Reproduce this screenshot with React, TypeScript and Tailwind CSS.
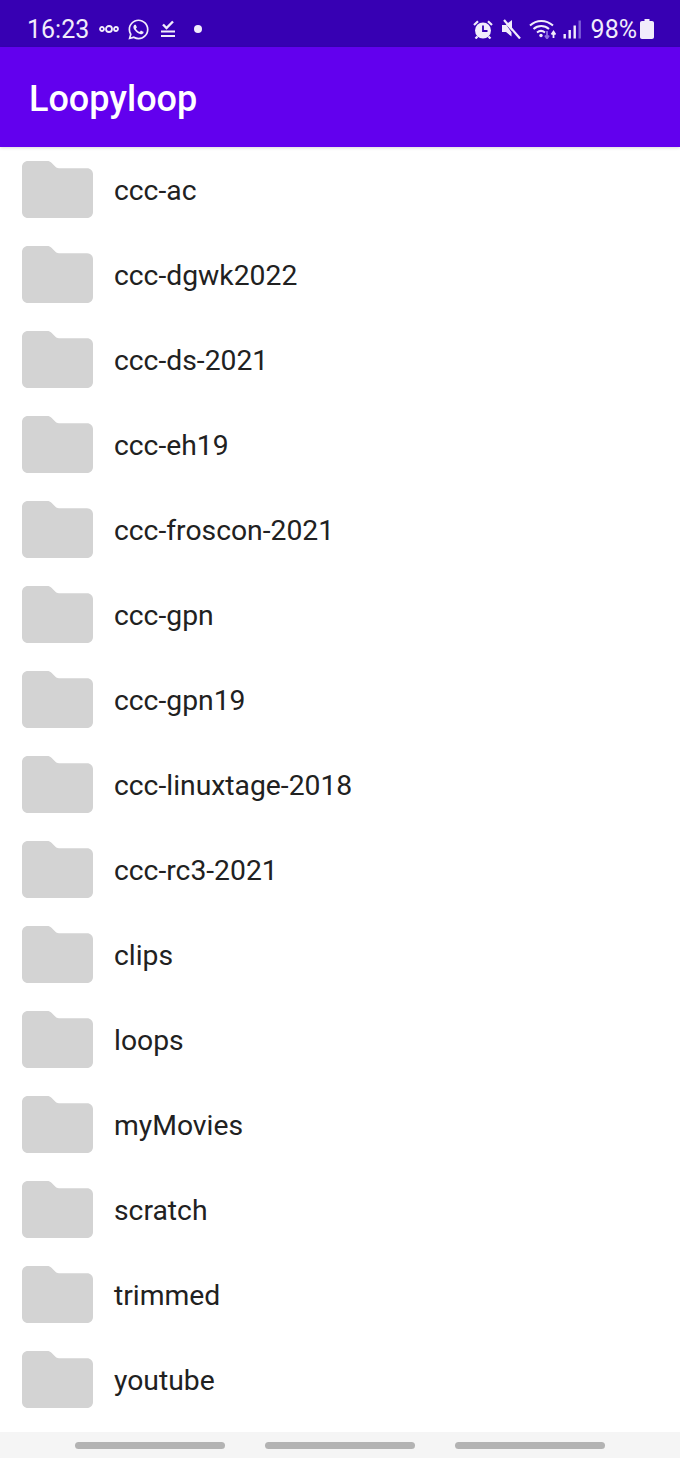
import { FaWhatsapp } from 'react-icons/fa'

const folders = [
  'ccc-ac',
  'ccc-dgwk2022',
  'ccc-ds-2021',
  'ccc-eh19',
  'ccc-froscon-2021',
  'ccc-gpn',
  'ccc-gpn19',
  'ccc-linuxtage-2018',
  'ccc-rc3-2021',
  'clips',
  'loops',
  'myMovies',
  'scratch',
  'trimmed',
  'youtube',
]

function FolderIcon() {
  return (
    <svg width="71" height="57" viewBox="0 0 71 57" className="shrink-0">
      <path
        d="M6 0H25C27 0 28.3 .6 29.5 1.8L33.2 5.6C34.2 6.6 35.3 7.2 37 7.2H65C68.4 7.2 71 9.8 71 13V51C71 54.4 68.4 57 65 57H6C2.6 57 0 54.4 0 51V6C0 2.6 2.6 0 6 0Z"
        fill="#d3d3d3"
      />
    </svg>
  )
}

function StatusBar() {
  return (
    <div className="h-[47px] shrink-0 bg-[#3700b3] flex items-center justify-between pt-[11px] pl-[27px] pr-[26px] text-[#f1ecfb]">
      <div className="flex items-center">
        <span className="text-[25px] leading-none">16:23</span>
        <svg width="20" height="10" viewBox="0 0 20 10" className="ml-[10px]" fill="none" stroke="currentColor" strokeWidth="1.8">
          <circle cx="3" cy="5" r="2" />
          <circle cx="10" cy="5" r="3" />
          <circle cx="17" cy="5" r="2" />
        </svg>
        <FaWhatsapp size={23} className="ml-[8px]" />
        <svg width="16" height="20" viewBox="0 0 16 20" className="ml-[10px]" fill="none" stroke="currentColor">
          <path d="M3 5.5L6.5 9L13 2.5" strokeWidth="2.4" />
          <path d="M1 12.5H15M1 17H15" strokeWidth="2" />
        </svg>
        <span className="ml-[18px] size-[8px] rounded-full bg-current" />
      </div>
      <div className="flex items-center">
        {/* alarm */}
        <svg width="20" height="19" viewBox="0 0 20 19">
          <circle cx="10" cy="10.5" r="8" fill="currentColor" />
          <path d="M10 5.5V11H14.5" fill="none" stroke="#3700b3" strokeWidth="1.8" />
          <path d="M1 5L5 1.2M19 5L15 1.2M4.5 16.5L2.5 18.5M15.5 16.5L17.5 18.5" fill="none" stroke="currentColor" strokeWidth="2.2" />
        </svg>
        {/* muted speaker */}
        <svg width="20" height="20" viewBox="0 0 20 20" className="ml-[8px]">
          <path d="M5 5.5L11 1V12Z" fill="currentColor" />
          <path d="M3 1L19 19.5" fill="none" stroke="currentColor" strokeWidth="2.2" />
          <path d="M1 6V13H5L10.5 17.5V13.5L5.5 6Z" fill="currentColor" />
        </svg>
        {/* wifi with data arrows */}
        <svg width="27" height="20" viewBox="0 0 27 20" className="ml-[8px]" fill="none">
          <path d="M1 6.5C7.5 .5 17 .5 24 6.5M4.5 10C9 6 15.5 6 20 10M8 13.5C10.5 11.5 13.5 11.5 16 13.5" stroke="currentColor" strokeWidth="2" />
          <circle cx="12" cy="16.5" r="1.7" fill="currentColor" />
          <path d="M18 12V19M16 16.5L18 19.5L20 16.5" stroke="#8f6fe0" strokeWidth="1.8" />
          <path d="M24.5 19V13M22.5 15.5L24.5 12.5L26.5 15.5" stroke="currentColor" strokeWidth="1.8" />
        </svg>
        <svg width="18" height="19" viewBox="0 0 18 19" className="ml-[7px]">
          <rect x="0.5" y="14" width="2.4" height="4.5" fill="currentColor" />
          <rect x="5.5" y="10" width="2.4" height="8.5" fill="currentColor" />
          <rect x="10.5" y="5.5" width="2.4" height="13" fill="currentColor" />
          <rect x="15.5" y="0.5" width="2.4" height="18" fill="#7d5cd8" />
        </svg>
        <span className="ml-[10px] text-[25px] leading-none">98%</span>
        <svg width="14" height="20" viewBox="0 0 14 20" className="ml-[3px]">
          <path d="M4.5 0H9.5V2H12C13.2 2 14 2.8 14 4V18C14 19.2 13.2 20 12 20H2C.8 20 0 19.2 0 18V4C0 2.8 .8 2 2 2H4.5Z" fill="currentColor" />
        </svg>
      </div>
    </div>
  )
}

export default function App() {
  return (
    <div className="w-[680px] h-[1458px] flex flex-col bg-white font-['Roboto',sans-serif] overflow-hidden">
      <StatusBar />
      <header className="h-[100px] shrink-0 bg-[#6200ee] flex items-center pl-[29px] pt-[3px] text-white text-[36px] font-medium z-10 shadow-[0_1px_3px_rgba(0,0,0,0.15)]">
        Loopyloop
      </header>
      <ul className="flex-1">
        {folders.map((name) => (
          <li key={name} className="h-[85px] flex items-center pl-[22px]">
            <FolderIcon />
            <span className="ml-[21px] pt-[3px] text-[28.3px] text-[#212121]">{name}</span>
          </li>
        ))}
      </ul>
      <nav className="h-[26px] shrink-0 bg-[#f5f5f5] flex items-start pl-[75px] pt-[10px] gap-[40px]">
        <div className="w-[150px] h-[7px] rounded-full bg-[#b3b3b3]" />
        <div className="w-[150px] h-[7px] rounded-full bg-[#b3b3b3]" />
        <div className="w-[150px] h-[7px] rounded-full bg-[#b3b3b3]" />
      </nav>
    </div>
  )
}
